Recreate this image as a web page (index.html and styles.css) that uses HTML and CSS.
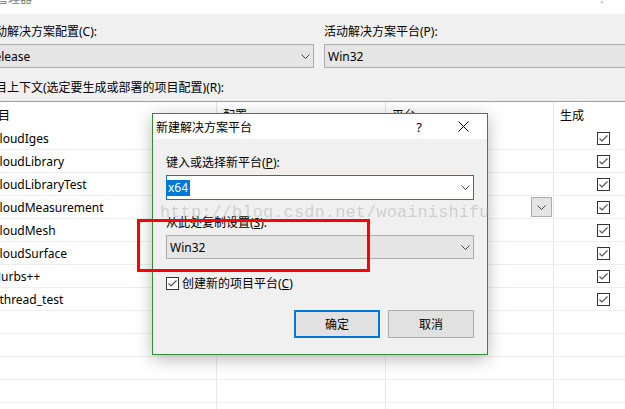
FILE: index.html
```html
<!DOCTYPE html>
<html lang="zh-CN">
<head>
<meta charset="utf-8">
<title>配置管理器</title>
<link rel="stylesheet" href="styles.css">
</head>
<body>
<div class="titlebar">
  <span class="title">配置管理器</span>
  <span class="title-help">?</span>
</div>
<div class="main">
  <div class="top-row">
    <div class="field field-left">
      <div class="lbl">活动解决方案配置(C):</div>
      <div class="combo"><span>Release</span><svg class="chev" width="9" height="5" viewBox="0 0 9 5"><polyline points="0.5,0.5 4.5,4.5 8.5,0.5"/></svg></div>
    </div>
    <div class="field field-right">
      <div class="lbl">活动解决方案平台(P):</div>
      <div class="combo"><span>Win32</span><svg class="chev" width="9" height="5" viewBox="0 0 9 5"><polyline points="0.5,0.5 4.5,4.5 8.5,0.5"/></svg></div>
    </div>
  </div>
  <div class="lbl ctx">项目上下文(选定要生成或部署的项目配置)(R):</div>
  <div class="grid">
    <div class="grow ghead">
      <div class="cell c1">项目</div>
      <div class="cell">配置</div>
      <div class="cell">平台</div>
      <div class="cell">生成</div>
    </div>
    <div class="grow"><div class="cell c1">CloudIges</div><div class="cell">Release</div><div class="cell">Win32</div><div class="cell cb"><span class="chk"></span></div></div>
    <div class="grow"><div class="cell c1">CloudLibrary</div><div class="cell">Release</div><div class="cell">Win32</div><div class="cell cb"><span class="chk"></span></div></div>
    <div class="grow"><div class="cell c1">CloudLibraryTest</div><div class="cell">Release</div><div class="cell">Win32</div><div class="cell cb"><span class="chk"></span></div></div>
    <div class="grow"><div class="cell c1">CloudMeasurement</div><div class="cell">Release</div><div class="cell edit"><span>Win32</span><span class="dd"><svg class="chev" width="9" height="5" viewBox="0 0 9 5"><polyline points="0.5,0.5 4.5,4.5 8.5,0.5"/></svg></span></div><div class="cell cb"><span class="chk"></span></div></div>
    <div class="grow"><div class="cell c1">CloudMesh</div><div class="cell">Release</div><div class="cell">Win32</div><div class="cell cb"><span class="chk"></span></div></div>
    <div class="grow"><div class="cell c1">CloudSurface</div><div class="cell">Release</div><div class="cell">Win32</div><div class="cell cb"><span class="chk"></span></div></div>
    <div class="grow"><div class="cell c1">Nurbs++</div><div class="cell">Release</div><div class="cell">Win32</div><div class="cell cb"><span class="chk"></span></div></div>
    <div class="grow"><div class="cell c1">pthread_test</div><div class="cell">Release</div><div class="cell">Win32</div><div class="cell cb"><span class="chk"></span></div></div>
    <div class="grow"><div class="cell c1"></div><div class="cell"></div><div class="cell"></div><div class="cell"></div></div>
    <div class="grow"><div class="cell c1"></div><div class="cell"></div><div class="cell"></div><div class="cell"></div></div>
    <div class="grow"><div class="cell c1"></div><div class="cell"></div><div class="cell"></div><div class="cell"></div></div>
    <div class="grow"><div class="cell c1"></div><div class="cell"></div><div class="cell"></div><div class="cell"></div></div>
    <div class="grow"><div class="cell c1"></div><div class="cell"></div><div class="cell"></div><div class="cell"></div></div>
  </div>
</div>

<div class="dialog">
  <div class="dtitle">
    <span class="dt-text">新建解决方案平台</span>
    <span class="dt-help">?</span>
    <svg class="dt-close" width="11" height="11" viewBox="0 0 11 11"><line x1="0.5" y1="0.5" x2="10.5" y2="10.5"/><line x1="10.5" y1="0.5" x2="0.5" y2="10.5"/></svg>
  </div>
  <div class="dbody">
    <div class="lbl">键入或选择新平台(<span class="u">P</span>):</div>
    <div class="dinput"><span class="sel">x64</span><svg class="chev" width="9" height="5" viewBox="0 0 9 5"><polyline points="0.5,0.5 4.5,4.5 8.5,0.5"/></svg></div>
    <div class="lbl lbl2">从此处复制设置(<span class="u">S</span>):</div>
    <div class="combo dcombo"><span>Win32</span><svg class="chev" width="9" height="5" viewBox="0 0 9 5"><polyline points="0.5,0.5 4.5,4.5 8.5,0.5"/></svg></div>
    <div class="checkrow"><span class="chk"></span><span>创建新的项目平台(<span class="u">C</span>)</span></div>
    <div class="buttons">
      <div class="btn btn-ok">确定</div>
      <div class="btn">取消</div>
    </div>
  </div>
</div>

<div class="redbox"></div>
<div class="watermark">http://blog.csdn.net/woainishifu</div>
</body>
</html>
```
FILE: styles.css
```css
* { box-sizing: border-box; }
html, body {
  margin: 0;
  width: 625px;
  height: 409px;
  overflow: hidden;
}
body {
  position: relative;
  background: #f0f0f0;
  font-family: "Noto Sans", "Noto Sans CJK SC", sans-serif;
  font-size: 12px;
  color: #000;
}

.titlebar {
  height: 14px;
  background: #fff;
  display: flex;
  justify-content: space-between;
  overflow: hidden;
}
.title {
  margin-left: -28px;
  margin-top: -9px;
  line-height: 16px;
  color: #7a7a7a;
  white-space: nowrap;
}
.title-help {
  margin-right: 20px;
  margin-top: -9px;
  line-height: 16px;
  color: #9a9a9a;
}

.main {
  margin-left: -17px;
  padding-top: 10px;
}
.top-row {
  display: flex;
  gap: 10px;
}
.field { width: 331px; flex: none; }

.lbl {
  height: 16px;
  line-height: 16px;
  white-space: nowrap;
}
.u { text-decoration: underline; }

.combo {
  margin-top: 4px;
  height: 24px;
  border: 1px solid #adadad;
  background: #e5e5e5;
  display: flex;
  align-items: center;
  justify-content: space-between;
  padding: 0 3px 0 3px;
  white-space: nowrap;
}
.chev { display: block; flex: none; }
.chev polyline { fill: none; stroke: #444; stroke-width: 1; }

.ctx { margin-top: 12px; }

.grid {
  margin-top: 5px;
  background: #fff;
  border-top: 1px solid #a0a0a0;
}
.grow {
  display: grid;
  grid-template-columns: 234px 169px 168px 100px;
  height: 23px;
  border-bottom: 1px solid #efefef;
}
.ghead {
  height: 25px;
  border-bottom: none;
}
.cell {
  border-right: 1px solid #e6e9ef;
  display: flex;
  align-items: center;
  padding-left: 6px;
  white-space: nowrap;
  overflow: hidden;
}
.ghead .cell { border-right-color: #e3e3e3; padding-left: 6px; }
.ghead .c1 { padding-left: 3px; }
.grow .c1 { padding-left: 9px; }
.ghead .cell.c1 { padding-left: 3px; }
.cb { padding-left: 43px; }
.edit { justify-content: space-between; padding-right: 1px; }
.dd {
  width: 21px;
  height: 20px;
  border: 1px solid #adadad;
  background: #e5e5e5;
  display: flex;
  align-items: center;
  justify-content: center;
}

.chk {
  display: inline-block;
  flex: none;
  width: 13px;
  height: 13px;
  border: 1px solid #333;
  background: #fff url("data:image/svg+xml,%3Csvg xmlns='http://www.w3.org/2000/svg' width='11' height='11' viewBox='0 0 11 11'%3E%3Cpolyline points='1.5,5.5 4,8 9.5,2.5' fill='none' stroke='%23555' stroke-width='1.2'/%3E%3C/svg%3E") no-repeat center;
}

/* dialog */
.dialog {
  position: absolute;
  left: 152px;
  top: 113px;
  width: 336px;
  height: 242px;
  border: 1px solid #2f8f2f;
  background: #f0f0f0;
  box-shadow: 0 4px 16px rgba(0, 0, 0, 0.28);
  z-index: 5;
}
.dtitle {
  height: 25px;
  background: #fff;
  display: flex;
  align-items: center;
  padding-left: 3px;
}
.dt-text { flex: 1; }
.dt-help {
  margin-right: 36px;
  font-size: 13px;
}
.dt-close { margin-right: 18px; display: block; }
.dt-close line { stroke: #000; stroke-width: 1; }

.dbody {
  padding: 16px 13px 15px 13px;
}
.dinput {
  margin-top: 4px;
  height: 25px;
  border: 1px solid #0078d7;
  background: #fff;
  display: flex;
  align-items: center;
  justify-content: space-between;
  padding: 0 3px 0 0;
}
.sel {
  background: #0078d7;
  color: #fff;
  line-height: 16px;
  padding: 0 2px 0 1px;
}
.lbl2 { margin-top: 15px; }
.dcombo { margin-top: 4px; }
.checkrow {
  margin-top: 16px;
  height: 16px;
  display: flex;
  align-items: center;
  gap: 3px;
  white-space: nowrap;
}
.buttons {
  margin-top: 19px;
  display: flex;
  justify-content: flex-end;
  gap: 8px;
}
.btn {
  width: 86px;
  height: 28px;
  border: 1px solid #adadad;
  background: #e1e1e1;
  display: flex;
  align-items: center;
  justify-content: center;
}
.btn-ok { border: 2px solid #0078d7; }

.redbox {
  position: absolute;
  left: 137px;
  top: 219px;
  width: 233px;
  height: 53px;
  border: 3px solid #f00;
  z-index: 6;
}
.watermark {
  position: absolute;
  left: 160px;
  top: 203px;
  font-family: "Liberation Mono", monospace;
  font-size: 17px;
  line-height: 20px;
  letter-spacing: 0.1px;
  color: rgba(150, 150, 150, 0.38);
  white-space: nowrap;
  z-index: 7;
}
```
